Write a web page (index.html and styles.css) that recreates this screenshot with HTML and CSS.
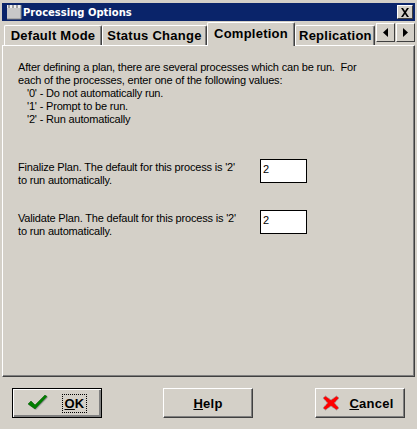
FILE: index.html
```html
<!DOCTYPE html>
<html lang="en">
<head>
<meta charset="utf-8">
<title>Processing Options</title>
<link rel="stylesheet" href="styles.css">
</head>
<body>
<div class="dialog">
  <div class="titlebar">
    <svg class="appicon" width="16" height="16" viewBox="0 0 16 16"><rect x="1" y="1" width="14" height="14" fill="#c8c8c8"/><rect x="1" y="1" width="14" height="3" fill="#eee"/><path d="M3 1v3M7 1v3M11 1v3" stroke="#555"/><path d="M15 1v14H1" fill="none" stroke="#888"/></svg>
    <span class="title">Processing Options</span>
    <span class="close"><svg width="10" height="9" viewBox="0 0 10 9"><path d="M1 0h2l2 3 2-3h2L6 4.500 9 9H7L5 6 3 9H1l3-4.500z" fill="#000"/></svg></span>
  </div>
  <div class="tabs">
    <div class="tab t1">Default Mode</div>
    <div class="tab t2">Status Change</div>
    <div class="tab active t3">Completion</div>
    <div class="tab t4">Replication</div>
    <div class="scroll">
      <span class="arrow"><svg width="7" height="9" viewBox="0 0 7 9"><path d="M6 0v9L1 4.500z" fill="#000"/></svg></span>
      <span class="arrow"><svg width="7" height="9" viewBox="0 0 7 9"><path d="M1 0v9l5-4.500z" fill="#000"/></svg></span>
    </div>
  </div>
  <div class="panel">
    <p class="intro">After defining a plan, there are several processes which can be run.&nbsp; For<br>each of the processes, enter one of the following values:</p>
    <ul class="values">
      <li>'0' - Do not automatically run.</li>
      <li>'1' - Prompt to be run.</li>
      <li>'2' - Run automatically</li>
    </ul>
    <div class="field first">
      <label class="flabel">Finalize Plan. The default for this process is '2'<br>to run automatically.</label>
      <input class="finput" type="text" value="2">
    </div>
    <div class="field">
      <label class="flabel">Validate Plan. The default for this process is '2'<br>to run automatically.</label>
      <input class="finput" type="text" value="2">
    </div>
  </div>
  <div class="buttons">
    <button class="btn default" type="button">
      <svg class="bicon" width="20" height="17" viewBox="0 0 20 17"><path d="M1 10l3-3 4 4L18 1l2 1.500L8 15z" fill="#a0a0a0"/><path d="M0 9l3-3 4 4L17 0l2 1.500L7 14z" fill="#008000" stroke="#004d00" stroke-width=".5"/></svg>
      <span class="focus"><u>O</u>K</span>
    </button>
    <button class="btn help" type="button"><span><u>H</u>elp</span></button>
    <button class="btn cancel" type="button">
      <svg class="bicon" width="18" height="16" viewBox="0 0 18 16"><path d="M3.500 1L9 5l5.500-4L17 3l-4.500 5L17 13l-2.500 2L9 11l-5.500 4L1 13l4.500-5L1 3z" fill="#ff0000" stroke="#9a9a9a" stroke-width="1" stroke-dasharray="1.500 .7"/></svg>
      <span><u>C</u>ancel</span>
    </button>
  </div>
</div>
</body>
</html>
```

FILE: styles.css
```css
* { box-sizing: border-box; }
html, body { margin: 0; padding: 0; }
body {
  width: 417px;
  height: 429px;
  overflow: hidden;
  background: #d4d0c8;
  font-family: "Liberation Sans", Arial, sans-serif;
  font-size: 11px;
  color: #000;
}
.dialog { width: 417px; height: 429px; padding: 3px 2px 0; }
.titlebar {
  height: 18px;
  background: #0a246a;
  display: flex;
  align-items: center;
  padding: 0 2px 0 4px;
  color: #fff;
}
.appicon { flex: none; }
.title {
  font-family: "DejaVu Sans", sans-serif;
  font-weight: bold;
  font-size: 10px;
  margin-left: 1px;
  flex: 1;
}
.close {
  width: 16px;
  height: 14px;
  background: #d4d0c8;
  border: 1px solid;
  border-color: #fff #404040 #404040 #fff;
  display: flex;
  align-items: center;
  justify-content: center;
}
.tabs {
  position: relative;
  height: 23px;
  margin-top: 1px;
  display: flex;
  align-items: flex-end;
  padding-left: 2px;
}
.tab {
  height: 20px;
  border: 1px solid;
  border-color: #fff #404040 transparent #fff;
  border-bottom: 0;
  border-radius: 2px 2px 0 0;
  font-weight: bold;
  font-size: 13px;
  letter-spacing: .25px;
  display: flex;
  align-items: center;
  justify-content: center;
  white-space: nowrap;
  background: #d4d0c8;
  box-shadow: inset -1px 0 0 #808080;
}
.t1 { width: 98px; }
.t2 { width: 105px; }
.t3 { width: 88px; }
.t4 { width: 80px; justify-content: flex-start; padding-left: 3px; overflow: hidden; }
.active {
  height: 24px;
  padding-bottom: 3px;
  position: relative;
  z-index: 1;
  margin-bottom: -1px;
}
.scroll {
  position: absolute;
  right: 0;
  top: 1px;
  display: flex;
  gap: 1px;
}
.arrow {
  width: 19px;
  height: 19px;
  border: 1px solid;
  border-color: #fff #404040 #404040 #fff;
  background: #d4d0c8;
  display: flex;
  align-items: center;
  justify-content: center;
}
.panel {
  height: 332px;
  border: 1px solid;
  border-color: #fff #404040 #404040 #fff;
  box-shadow: inset -1px -1px 0 #808080;
  padding: 15px 0 0 15px;
  line-height: 13px;
  letter-spacing: -.18px;
}
.intro { margin: 0; }
.values { list-style: none; margin: 0; padding: 0 0 0 9px; }
.field {
  display: flex;
  align-items: flex-start;
  margin-top: 23px;
}
.field.first { margin-top: 33px; }
.flabel { width: 242px; flex: none; padding-top: 2px; }
.finput {
  width: 47px;
  height: 24px;
  padding: 0 0 4px 2px;
  border: 1px solid #000;
  background: #fff;
  font: 11px "Liberation Sans", Arial, sans-serif;
  color: #000;
  border-radius: 0;
  outline: 0;
}
.buttons {
  display: flex;
  justify-content: space-between;
  padding: 11px 10px 0 10px;
}
.btn {
  width: 90px;
  height: 30px;
  background: #d4d0c8;
  border: 1px solid;
  border-color: #fff #404040 #404040 #fff;
  box-shadow: inset -1px -1px 0 #808080;
  font-family: "Liberation Sans", sans-serif;
  font-weight: bold;
  font-size: 13px;
  letter-spacing: .25px;
  color: #000;
  display: flex;
  align-items: center;
  justify-content: center;
  padding: 0;
}
.default { border-color: #000; box-shadow: inset 1px 1px 0 #fff, inset -2px -2px 0 #808080; gap: 15px; }
.help { margin-right: 1px; }
.cancel { gap: 9px; padding-right: 4px; }
.focus { outline: 1px dotted #000; padding: 1px 1px; }
```
